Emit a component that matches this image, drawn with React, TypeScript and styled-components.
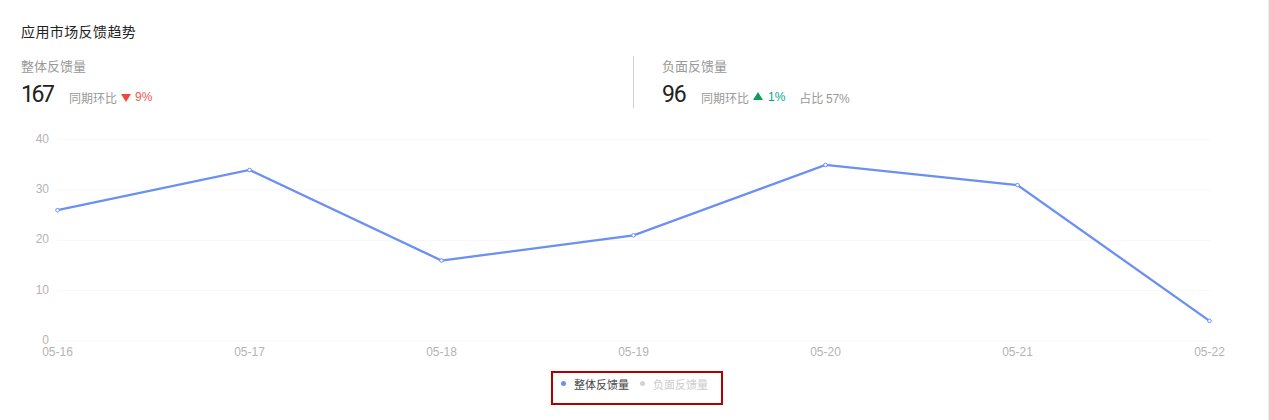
import React from 'react'
import styled, { createGlobalStyle } from 'styled-components'

const GlobalStyle = createGlobalStyle`
  html, body {
    margin: 0;
    padding: 0;
    background: #fff;
  }
  body {
    font-family: "Liberation Sans", "Noto Sans CJK SC", sans-serif;
  }
`

const labels = ['05-16', '05-17', '05-18', '05-19', '05-20', '05-21', '05-22']
const values = [26, 34, 16, 21, 35, 31, 4]
const ticks = [40, 30, 20, 10, 0]

const xAt = (i: number) => 57.5 + i * 192
const yAt = (v: number) => 341 - v * 5.03

const Chart = () => (
  <ChartSvg width="1262" height="232" viewBox="0 130 1262 232">
    {ticks.map((t) => (
      <g key={t}>
        <line x1="57" x2="1210" y1={yAt(t)} y2={yAt(t)} stroke="#f7f7f7" />
        <AxisText x="49" y={yAt(t) + 3} textAnchor="end">{t}</AxisText>
      </g>
    ))}
    {labels.map((l, i) => (
      <AxisText key={l} x={xAt(i)} y="356" textAnchor="middle">{l}</AxisText>
    ))}
    <polyline
      fill="none"
      stroke="#6b8ff2"
      strokeWidth="2.3"
      points={values.map((v, i) => `${xAt(i)},${yAt(v)}`).join(' ')}
    />
    {values.map((v, i) => (
      <circle key={i} cx={xAt(i)} cy={yAt(v)} r="1.8" fill="#fff" stroke="#6b8ff2" strokeWidth="1" />
    ))}
  </ChartSvg>
)

export default function App() {
  return (
    <Page>
      <GlobalStyle />
      <Title>应用市场反馈趋势</Title>
      <Stats>
        <Stat>
          <StatLabel>整体反馈量</StatLabel>
          <StatRow>
            <StatNumber $tight>167</StatNumber>
            <Meta>同期环比</Meta>
            <Arrow $down />
            <Change $down>9%</Change>
          </StatRow>
        </Stat>
        <Stat $divided>
          <StatLabel>负面反馈量</StatLabel>
          <StatRow>
            <StatNumber>96</StatNumber>
            <Meta>同期环比</Meta>
            <Arrow />
            <Change>1%</Change>
            <Share>占比 57%</Share>
          </StatRow>
        </Stat>
      </Stats>
      <Chart />
      <LegendBox>
        <LegendItem>
          <Dot $color="#6b8ff2" />
          <LegendText $color="#444">整体反馈量</LegendText>
        </LegendItem>
        <LegendItem>
          <Dot $color="#d2d2d2" />
          <LegendText $color="#ccc">负面反馈量</LegendText>
        </LegendItem>
      </LegendBox>
    </Page>
  )
}

const Page = styled.div`
  width: 1269px;
  height: 420px;
  overflow: hidden;
  box-sizing: border-box;
  padding-top: 24px;
  border-right: 1px solid #eeeeee;
  display: flex;
  flex-direction: column;
`

const Title = styled.div`
  margin-left: 21px;
  font-size: 14px;
  letter-spacing: 0.4px;
  line-height: 17px;
  color: #222;
`

const Stats = styled.div`
  display: flex;
  margin-top: 15px;
  height: 52px;
`

const Stat = styled.div<{ $divided?: boolean }>`
  box-sizing: border-box;
  padding-top: 2px;
  padding-left: ${(p) => (p.$divided ? '28px' : '21px')};
  width: ${(p) => (p.$divided ? '600px' : '633px')};
  border-left: ${(p) => (p.$divided ? '1px solid #cfcfcf' : 'none')};
`

const StatLabel = styled.div`
  font-size: 13px;
  line-height: 17px;
  color: #999;
`

const StatRow = styled.div`
  display: flex;
  align-items: center;
  margin-top: 7px;
  height: 26px;
`

const StatNumber = styled.span<{ $tight?: boolean }>`
  font-family: Roboto, sans-serif;
  font-size: 23px;
  letter-spacing: ${(p) => (p.$tight ? '-2.4px' : '-1.2px')};
  line-height: 26px;
  color: #222;
  margin-right: 14px;
  min-width: ${(p) => (p.$tight ? '34px' : '25px')};
`

const Meta = styled.span`
  font-size: 12px;
  color: #999;
  margin-top: 4px;
`

const Arrow = styled.span<{ $down?: boolean }>`
  width: 0;
  height: 0;
  border-left: 5.5px solid transparent;
  border-right: 5.5px solid transparent;
  ${(p) =>
    p.$down
      ? 'margin: 5px 4px 0; border-top: 8px solid #f0483e;'
      : 'margin: 1px 5px 0 4px; border-bottom: 8px solid #0f9d58;'}
`

const Change = styled.span<{ $down?: boolean }>`
  font-size: 12px;
  margin-top: 4px;
  color: ${(p) => (p.$down ? '#f0584f' : '#00a88a')};
`

const Share = styled.span`
  font-size: 12px;
  letter-spacing: -0.2px;
  margin: 4px 0 0 14px;
  color: #999;
`

const ChartSvg = styled.svg`
  display: block;
  margin-top: 22px;
  flex-shrink: 0;
`

const AxisText = styled.text`
  font-size: 12px;
  fill: #b4b4b4;
  font-family: "Liberation Sans", sans-serif;
`

const LegendBox = styled.div`
  box-sizing: border-box;
  align-self: flex-start;
  margin: 9px 0 0 551px;
  width: 172px;
  height: 34px;
  flex-shrink: 0;
  border: 2px solid #b00000;
  padding: 0 0 9px 8px;
  display: flex;
  align-items: center;
  gap: 11px;
`

const LegendItem = styled.div`
  display: flex;
  align-items: center;
  gap: 8px;
`

const Dot = styled.span<{ $color: string }>`
  width: 5px;
  height: 5px;
  border-radius: 50%;
  background: ${(p) => p.$color};
`

const LegendText = styled.span<{ $color: string }>`
  font-size: 11px;
  color: ${(p) => p.$color};
`
